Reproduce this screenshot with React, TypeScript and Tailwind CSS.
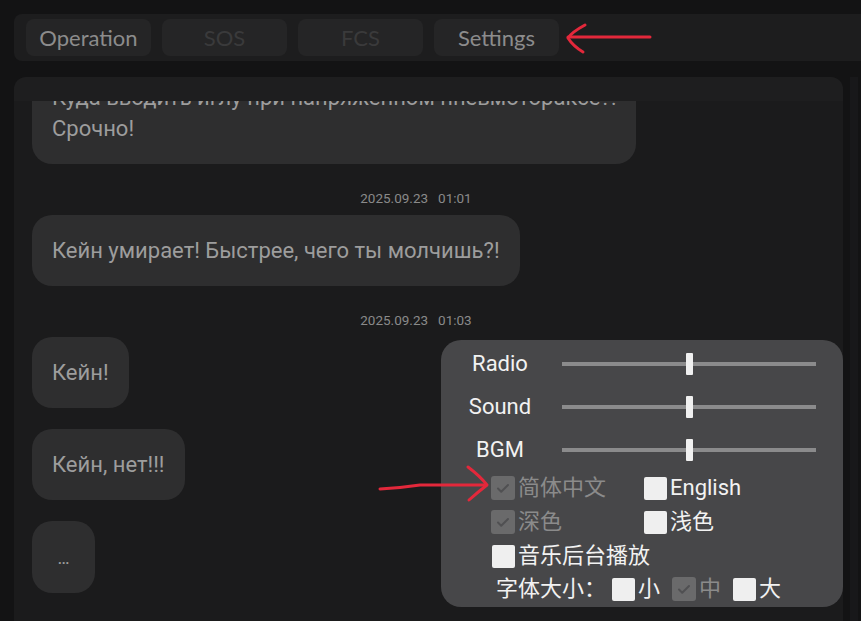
import React from "react";

type TabProps = { label: string; dim?: boolean };

const Tab = ({ label, dim }: TabProps) => (
  <div
    className={`w-[125px] h-[37px] rounded-[8px] bg-[#252526] flex items-center justify-center text-[22px] font-['Lato',sans-serif] ${
      dim ? "text-[#3a3a3b]" : "text-[#8c8c8c]"
    }`}
  >
    {label}
  </div>
);

const Bubble = ({ children }: { children: React.ReactNode }) => (
  <div className="self-start rounded-[20px] bg-[#2e2e2f] px-5 py-5 text-[22px] leading-[31px] text-[#9d9d9d] whitespace-nowrap">
    {children}
  </div>
);

const Stamp = ({ time }: { time: string }) => (
  <div className="mt-[25px] mb-[8px] text-center text-[13.5px] leading-[18px] text-[#8a8a8a]">
    <span>2025.09.23</span>
    <span className="ml-[10px]">{time}</span>
  </div>
);

const Box = ({ checked }: { checked?: boolean }) =>
  checked ? (
    <div className="w-[24px] h-[24px] rounded-[3px] bg-[#6a6a6b] flex items-center justify-center">
      <svg width="16" height="16" viewBox="0 0 16 16">
        <path d="M3 8.5l3.2 3.2L13 5" fill="none" stroke="#505052" strokeWidth="2" strokeLinecap="round" strokeLinejoin="round" />
      </svg>
    </div>
  ) : (
    <div className="w-[23px] h-[23px] rounded-[2px] bg-[#efefef]" />
  );

const Option = ({ label, checked }: { label: string; checked?: boolean }) => (
  <div className="flex items-center gap-[3px]">
    <Box checked={checked} />
    <span className={checked ? "text-[#8b8b8b]" : "text-[#f2f2f2]"}>{label}</span>
  </div>
);

const SliderRow = ({ label }: { label: string }) => (
  <div className="h-[43px] flex items-center">
    <div className="w-[118px] text-center text-[22px] text-[#f2f2f2]">{label}</div>
    <div className="ml-[3px] w-[254px] h-[4px] bg-[#8b8b8c] relative flex items-center justify-center">
      <div className="w-[7px] h-[22px] bg-[#f0f0f0] rounded-[1px]" />
    </div>
  </div>
);

export default function App() {
  return (
    <div className="relative w-full h-[621px] overflow-hidden bg-[#131314] font-['Roboto','Noto_Sans_CJK_SC',sans-serif]">
      {/* tab bar */}
      <div className="mt-[14px] ml-[14px] w-[900px] h-[47px] rounded-[8px] bg-[#1d1d1e] flex items-center gap-[11px] pl-[12px]">
        <Tab label="Operation" />
        <Tab label="SOS" dim />
        <Tab label="FCS" dim />
        <Tab label="Settings" />
      </div>

      <div className="mt-[16px] flex">
        {/* chat */}
        <div className="ml-[14px] w-[829px] h-[560px] rounded-t-[12px] bg-[#1e1e1f] pt-[24px]">
          <div className="h-full overflow-hidden bg-[#1b1b1c]">
            <div className="mt-[-39px] pl-[18px] pr-[43px] flex flex-col">
              <Bubble>
                Куда вводить иглу при напряженном пневмотораксе?!
                <br />
                Срочно!
              </Bubble>
              <Stamp time="01:01" />
              <Bubble>Кейн умирает! Быстрее, чего ты молчишь?!</Bubble>
              <Stamp time="01:03" />
              <Bubble>Кейн!</Bubble>
              <div className="h-[21px]" />
              <Bubble>Кейн, нет!!!</Bubble>
              <div className="h-[21px]" />
              <Bubble>
                <span className="inline-block w-[23px] text-center text-[18px]">…</span>
              </Bubble>
              <Stamp time="01:05" />
            </div>
          </div>
        </div>
        <div className="ml-[7px] w-[8px] h-[560px] bg-[#18181a]" />
      </div>

      {/* settings popup */}
      <div className="absolute left-[441px] top-[340px] w-[402px] h-[267px] rounded-[20px] bg-[#474749] pt-[2px]">
        <SliderRow label="Radio" />
        <SliderRow label="Sound" />
        <SliderRow label="BGM" />
        <div className="text-[22px] leading-[28px]">
          <div className="h-[34px] flex items-center pl-[50px]">
            <div className="w-[153px]">
              <Option label="简体中文" checked />
            </div>
            <Option label="English" />
          </div>
          <div className="h-[34px] flex items-center pl-[50px]">
            <div className="w-[153px]">
              <Option label="深色" checked />
            </div>
            <Option label="浅色" />
          </div>
          <div className="h-[34px] flex items-center pl-[51px]">
            <Option label="音乐后台播放" />
          </div>
          <div className="h-[32px] flex items-center pl-[55px] gap-[12px] text-[#f2f2f2]">
            <span className="mr-[-6px]">字体大小：</span>
            <Option label="小" />
            <Option label="中" checked />
            <Option label="大" />
          </div>
        </div>
      </div>

      {/* annotations */}
      <svg className="absolute inset-0 pointer-events-none" width="861" height="621" viewBox="0 0 861 621">
        <g fill="none" stroke="#e3283b" strokeWidth="3" strokeLinecap="round" strokeLinejoin="round">
          <path d="M568 37 L650 37" />
          <path d="M585 25 Q572 32 568 38 Q573 46 583 52" />
          <path d="M380 489 Q400 488 420 485 L486 485" />
          <path d="M468 467 Q480 476 487 485 Q478 492 469 500" />
        </g>
      </svg>
    </div>
  );
}
